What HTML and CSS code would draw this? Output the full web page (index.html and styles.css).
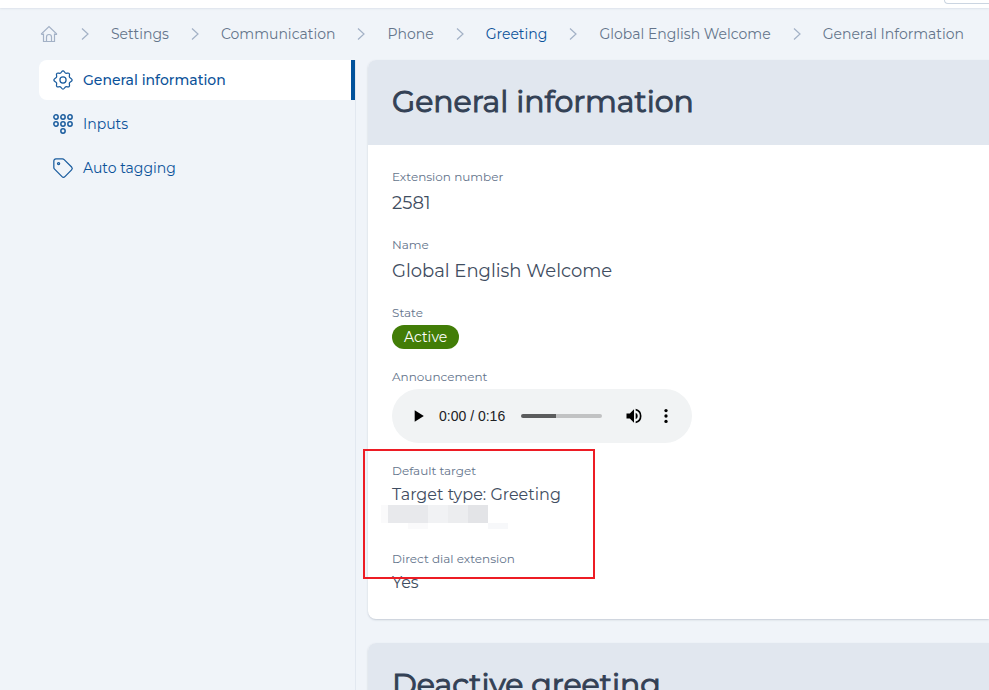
FILE: index.html
```html
<!DOCTYPE html>
<html lang="en">
<head>
<meta charset="utf-8">
<title>General information</title>
<link rel="stylesheet" href="styles.css">
</head>
<body>
<svg class="defs" aria-hidden="true">
  <symbol id="chevron" viewBox="0 0 20 20"><path d="M7 4.500l6 5.500-6 5.500"/></symbol>
</svg>
<header class="topbar"><button class="topbar-button" type="button" aria-label="Menu"></button></header>
<nav class="breadcrumb" aria-label="Breadcrumb">
  <a href="#" aria-label="Home"><svg class="crumb-icon" viewBox="0 0 20 20"><path d="M2.500 10.500V9.700L10 2.500l7.500 7.200v.8h-2M2.500 10.500h2M4.500 9.500v8h11v-8M7.500 17.500v-4.500a2.500 2.500 0 0 1 5 0v4.500"/></svg></a>
  <svg class="crumb-icon"><use href="#chevron"/></svg>
  <a href="#">Settings</a>
  <svg class="crumb-icon"><use href="#chevron"/></svg>
  <a href="#">Communication</a>
  <svg class="crumb-icon"><use href="#chevron"/></svg>
  <a href="#">Phone</a>
  <svg class="crumb-icon"><use href="#chevron"/></svg>
  <a class="current" href="#">Greeting</a>
  <svg class="crumb-icon"><use href="#chevron"/></svg>
  <a href="#">Global English Welcome</a>
  <svg class="crumb-icon"><use href="#chevron"/></svg>
  <a href="#">General Information</a>
</nav>
<div class="layout">
  <nav class="sidebar" aria-label="Sections">
    <a class="side-link active" href="#"><svg class="side-icon" viewBox="0 0 24 24"><circle cx="12" cy="12" r="3.700"/><path d="M12 1c1.600 0 1.800 2.200 3.200 2.800 1.400.6 3-.9 4.200.3 1.300 1.200-.3 2.900.3 4.300.6 1.400 3.300 1.900 3.300 3.600s-2.700 2.200-3.300 3.600c-.6 1.400 1 3.100-.3 4.300-1.200 1.200-2.800-.3-4.200.3-1.400.6-1.600 2.800-3.200 2.800s-1.800-2.200-3.200-2.800c-1.400-.6-3 .9-4.200-.3-1.300-1.200.3-2.900-.3-4.300C3.700 14.200 1 13.700 1 12s2.700-2.200 3.300-3.600c.6-1.400-1-3.100.3-4.300 1.200-1.200 2.800.3 4.200-.3C10.200 3.200 10.400 1 12 1z"/></svg>General information</a>
    <a class="side-link" href="#"><svg class="side-icon heavy" viewBox="0 0 24 24"><circle cx="3.600" cy="3.600" r="2.600"/><circle cx="12" cy="3.600" r="2.600"/><circle cx="20.400" cy="3.600" r="2.600"/><circle cx="3.600" cy="12" r="2.600"/><circle cx="12" cy="12" r="2.600"/><circle cx="20.400" cy="12" r="2.600"/><circle cx="12" cy="20.400" r="2.600"/></svg>Inputs</a>
    <a class="side-link" href="#"><svg class="side-icon" viewBox="0 0 24 24"><path d="M1 3.500A2.500 2.500 0 0 1 3.500 1h7.800a3 3 0 0 1 2.100.9l8.900 8.900a2.500 2.500 0 0 1 0 3.500l-8 8a2.500 2.500 0 0 1-3.500 0l-8.900-8.900A3 3 0 0 1 1 11.300z"/><circle cx="6.700" cy="6.700" r="1.300"/></svg>Auto tagging</a>
  </nav>
  <main class="content">
    <section class="card">
      <h1 class="card-title">General information</h1>
      <dl class="fields">
        <div class="field"><dt>Extension number</dt><dd class="large">2581</dd></div>
        <div class="field"><dt>Name</dt><dd class="large">Global English Welcome</dd></div>
        <div class="field"><dt>State</dt><dd><span class="badge">Active</span></dd></div>
        <div class="field"><dt>Announcement</dt><dd>
          <div class="player">
            <button type="button" aria-label="Play"><svg viewBox="0 0 24 24"><path d="M8 5v14l11-7z"/></svg></button>
            <span class="time">0:00 / 0:16</span>
            <input type="range" min="0" max="16" value="0" aria-label="Position">
            <button type="button" aria-label="Mute"><svg viewBox="0 0 24 24"><path d="M3 9v6h4l5 5V4L7 9H3zm13.500 3A4.500 4.500 0 0 0 14 7.970v8.050A4.470 4.470 0 0 0 16.500 12zM14 3.230v2.060a7 7 0 0 1 0 13.420v2.060a9 9 0 0 0 0-17.540z"/></svg></button>
            <button type="button" aria-label="More options"><svg viewBox="0 0 24 24"><circle cx="12" cy="5.500" r="2"/><circle cx="12" cy="12" r="2"/><circle cx="12" cy="18.500" r="2"/></svg></button>
          </div>
        </dd></div>
        <div class="marked">
          <div class="field"><dt>Default target</dt><dd>Target type: Greeting</dd><dd><svg class="redacted" viewBox="0 0 128 24" aria-hidden="true"><g shape-rendering="crispEdges"><path fill="#fafafb" d="M1 0h7v18H1zM28 18h20v6H28z"/><path fill="#e8e9ec" d="M8 0h40v18H8z"/><path fill="#f1f2f4" d="M48 0h20v18H48z"/><path fill="#ecedef" d="M68 0h20v18H68z"/><path fill="#e3e4e7" d="M88 0h20v18H88z"/><path fill="#f7f8fa" d="M108 18h20v6h-20z"/></g></svg></dd></div>
          <div class="field"><dt>Direct dial extension</dt><dd>Yes</dd></div>
        </div>
      </dl>
    </section>
    <section class="card">
      <h2 class="card-title">Deactive greeting</h2>
    </section>
  </main>
</div>
</body>
</html>
```
FILE: styles.css
```css
*, *::after { box-sizing: border-box; }
html { height: 100%; overflow: hidden; }
body {
  margin: 0;
  height: 100%;
  overflow: hidden;
  display: flex;
  flex-direction: column;
  background: #f0f4f9;
  color: #334155;
  font: 16px/24px Montserrat, Inter, sans-serif;
}
a { color: inherit; text-decoration: none; }
button { padding: 0; border: 0; background: none; }
.defs { display: none; }
.topbar {
  flex: none;
  height: 8px;
  display: flex;
  justify-content: flex-end;
  align-items: flex-start;
  background: #fff;
  box-shadow: 0 1px 2px #dde3eb;
}
.topbar-button {
  width: 45px;
  height: 4px;
  border: 1px solid #cbd5e1;
  border-width: 0 0 1px 1px;
  border-radius: 0 0 0 5px;
}
.breadcrumb {
  flex: none;
  display: flex;
  align-items: center;
  gap: 16px;
  height: 52px;
  padding-left: 39px;
  color: #64748b;
  font-size: 14px;
  white-space: nowrap;
}
.breadcrumb a { display: flex; }
.breadcrumb .current { color: #0b5299; }
.crumb-icon {
  flex: none;
  width: 20px;
  height: 20px;
  fill: none;
  stroke: #a3b1c6;
  stroke-width: 1.2;
}
.layout { flex: 1; display: flex; min-height: 0; }
.sidebar {
  flex: none;
  width: 356px;
  padding-left: 39px;
  border-right: 1px solid #e2e8f0;
  display: flex;
  flex-direction: column;
  gap: 4px;
}
.side-link {
  display: flex;
  align-items: center;
  gap: 10px;
  height: 40px;
  padding-left: 14px;
  color: #0b5299;
  font-size: 14px;
}
.side-link.active {
  background: #fff;
  border-right: 4px solid #00529b;
  border-radius: 8px 0 0 8px;
  font-weight: 500;
}
.side-icon {
  width: 20px;
  height: 20px;
  fill: none;
  stroke: #1a5c9e;
  stroke-width: 1.5;
  overflow: visible;
}
.side-icon.heavy { stroke-width: 1.8; }
.content {
  flex: 1;
  min-width: 0;
  padding-left: 12px;
  display: flex;
  flex-direction: column;
  gap: 24px;
}
.card {
  flex: none;
  background: #fff;
  border-radius: 8px 0 0 8px;
  box-shadow: 0 1px 2px #c5ccd6;
}
.card-title {
  margin: 0;
  padding: 24px 24px 25px;
  background: #e1e7ef;
  border-radius: 8px 0 0;
  font-size: 30px;
  line-height: 36px;
  font-weight: 400;
  -webkit-text-stroke: 1px #334155;
}
.fields {
  margin: 0;
  padding: 24px;
  display: flex;
  flex-direction: column;
  gap: 20px;
}
.field dt { margin-bottom: 4px; font-size: 12px; line-height: 16px; color: #64748b; }
.field dd { margin: 0; color: #3f4d61; }
.field .large { font-size: 18px; line-height: 28px; }
.badge {
  display: flex;
  width: max-content;
  padding: 0 12px;
  border-radius: 12px;
  background: #427d07;
  color: #fff;
  font-size: 14px;
}
.player {
  display: flex;
  align-items: center;
  width: 300px;
  height: 54px;
  padding: 0 10px;
  border-radius: 27px;
  background: #f1f3f4;
}
.player button { flex: none; width: 32px; height: 32px; }
.player svg { display: block; width: 20px; height: 20px; margin: auto; fill: #000; }
.player .time { margin: 0 16px 0 5px; font: 14px/20px "Liberation Sans", sans-serif; color: #202124; }
.player input {
  appearance: none;
  flex: 1;
  min-width: 0;
  height: 4px;
  margin: 0 16px 0 0;
  border-radius: 2px;
  background: linear-gradient(to right, #5b5c5d 43%, #c1c2c3 43%);
}
.player input::-webkit-slider-thumb { appearance: none; width: 0; height: 0; }
.marked { position: relative; display: flex; flex-direction: column; gap: 20px; }
.marked::after {
  content: "";
  position: absolute;
  top: -14px;
  left: -29px;
  width: 232px;
  height: 130px;
  border: 2px solid #ed1c24;
}
.redacted { display: block; width: 128px; height: 24px; margin: -2px 0 2px -12px; }
```
